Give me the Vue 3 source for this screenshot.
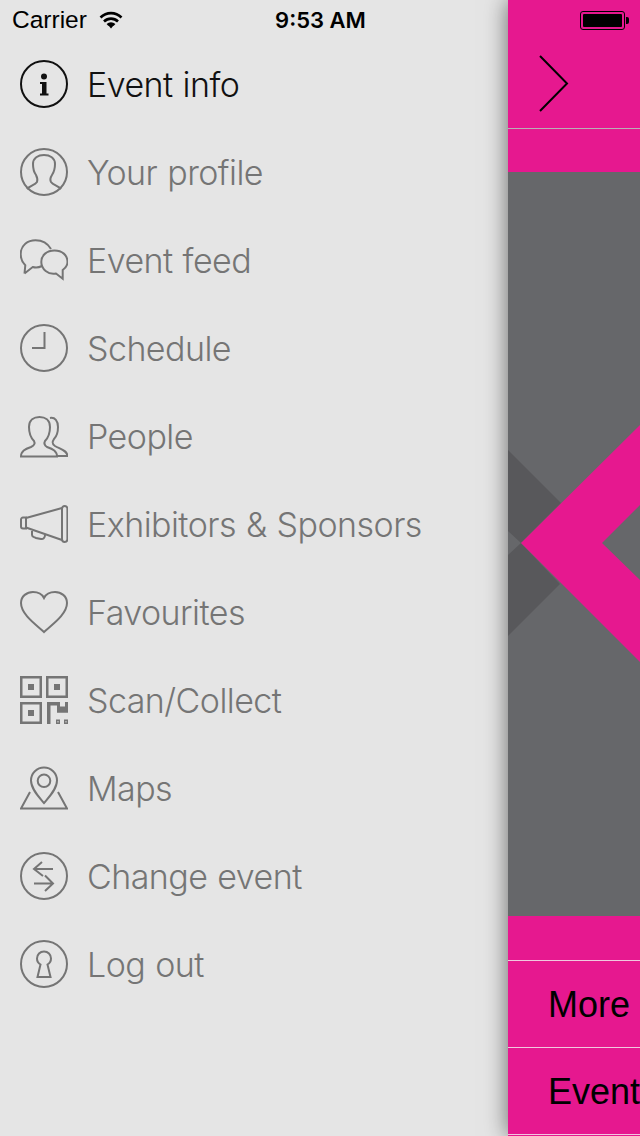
<script setup>
const ring = 'M24 1a23 23 0 1 0 0 46a23 23 0 1 0 0-46Z'

const items = [
  {
    label: 'Event info',
    active: true,
    lines: [ring],
    fills: ['M21 16.5a3 3 0 1 0 6 0a3 3 0 1 0-6 0Z M20 22H26.5V33.5H28.5V35.5H20V33.5H22V24H20Z'],
  },
  {
    label: 'Your profile',
    lines: [ring, 'M7 41C10 38 15 37 17 34C18 31 17 29 16 27C13 23 13 18 13 16C13 10 18 7 24 7C30 7 35 10 35 16C35 19 34 24 32 27C30 30 30 32 31 34C33 37 38 38 41 41'],
  },
  {
    label: 'Event feed',
    lines: [
      'M4.5 37.5L5.3 29.3C2 26 0.7 22 0.7 18C0.7 9 8 4.3 15.5 4.3C22.5 4.3 28 8 31 13M4.5 37.5L12.7 31C16 32 19 31.5 22 30',
      'M34.5 14.5C42 14.5 47.5 19 47.5 26C47.5 29 45.5 32 42.7 34L42.7 42.7L36 37.5C28 39 21.3 33 21.3 26C21.3 19 27 14.5 34.5 14.5Z',
    ],
  },
  {
    label: 'Schedule',
    lines: [ring, 'M24.5 8V24H12'],
  },
  {
    label: 'People',
    lines: [
      'M1 44.5C1 39 5 37 11 35C15 33 15 31 14 29C11 26 9 21 9 15C9 8 14 5 19.5 5C25 5 30 8 30 15C30 21 28 26 25 29C24 31 24 33 27 35C33 37 37 39 37 44.5Z',
      'M30 6C35 5 38 9 38 15C38 21 36 25 34 27C32 30 32 32 35 34C40 37 47 38 47.5 44H37',
    ],
  },
  {
    label: 'Exhibitors & Sponsors',
    lines: [
      'M44.7 6A2.7 2.7 0 0 1 47.4 8.7V39.3A2.7 2.7 0 0 1 42 39.3V8.7A2.7 2.7 0 0 1 44.7 6Z',
      'M3 17.5H6V28.5H3A2 2 0 0 1 1 26.5V19.5A2 2 0 0 1 3 17.5Z',
      'M6 18L42 8M6 27.5L42 40',
      'M12 31V35C12 37 14 37 16 38L21 39C23 39.5 25 38 25 35',
    ],
  },
  {
    label: 'Favourites',
    lines: ['M24 44C18 38 1 27 1 15C1 8 7 4 13 4C18 4 22 6 24 10C26 6 30 4 35 4C41 4 47 8 47 15C47 27 30 38 24 44Z'],
  },
  {
    label: 'Scan/Collect',
    fills: [
      'M0 0H22V22H0Z M2.5 2.5V19.5H19.5V2.5Z M8 8H14V14H8Z',
      'M26 0H48V22H26Z M28.5 2.5V19.5H45.5V2.5Z M34 8H40V14H34Z',
      'M0 26H22V48H0Z M2.5 28.5V45.5H19.5V28.5Z M8 34H14V40H8Z',
      'M27 26H40V30.5H45V26H48V36.7H37V29.5H30.5V48H27Z',
      'M36 43.5H40V48H36Z M37.5 45V46.5H38.5V45Z M44 43.5H48V48H44Z M45.5 45V46.5H46.5V45Z',
    ],
  },
  {
    label: 'Maps',
    lines: [
      'M10 28L1 44.5H47L38 28',
      'M24 39C19 33 11 25 11 16.5C11 9 17 3.5 24 3.5C31 3.5 37 9 37 16.5C37 25 29 33 24 39Z',
      'M24 10.5a6.3 6.3 0 1 0 0 12.6a6.3 6.3 0 1 0 0-12.6Z',
    ],
  },
  {
    label: 'Change event',
    lines: [ring, 'M33 17H14M22 10L14 17L23 24M14 31.5H33M25 23.5L33 31.5L25 39'],
  },
  {
    label: 'Log out',
    lines: [ring, 'M20.5 24.5C18 23 17 21 17 18.5C17 14.5 20 11.5 24 11.5C28 11.5 31 14.5 31 18.5C31 21 30 23 27.5 24.5L30.5 37H17.5Z'],
  },
]
</script>

<template>
  <div class="screen">
    <div class="status">
      <div class="status-left">
        <span>Carrier</span>
        <svg class="wifi" width="24" height="18" viewBox="0 0 24 18">
          <path d="M1.5 6.5C7.5 0.7 16.5 0.7 22.5 6.5" />
          <path d="M5 10.5C9 6.6 15 6.6 19 10.5" />
          <path d="M8.5 14C10.5 12 13.5 12 15.5 14" />
          <path class="wifi-dot" d="M9.5 14.5L12 12.5L14.5 14.5L12 17.5Z" />
        </svg>
      </div>
      <div class="status-time">9:53 AM</div>
      <div class="status-right">
        <div class="battery"><div class="battery-fill"></div></div>
        <div class="battery-nub"></div>
      </div>
    </div>

    <nav class="menu">
      <a v-for="item in items" :key="item.label" class="row" :class="{ active: item.active }">
        <svg class="icon" width="48" height="48" viewBox="0 0 48 48">
          <path v-for="d in item.lines" :key="d" class="line" :d="d" />
          <path v-for="d in item.fills" :key="d" class="solid" :d="d" />
        </svg>
        <span class="label">{{ item.label }}</span>
      </a>
    </nav>

    <main class="panel">
      <header class="panel-head">
        <svg width="30" height="58" viewBox="0 0 30 58">
          <path class="chevron" d="M1 1L28 28.5L1 56" />
        </svg>
      </header>
      <div class="panel-gap"></div>
      <div class="hero">
        <svg width="132" height="744" viewBox="508 172 132 744">
          <path fill="#58585b" d="M508 450L561 503L521 543L560 584L508 636V555L521 543L508 531Z" />
          <path fill="#e6188f" d="M521 543L640 425V505L602 543L640 580V662Z" />
        </svg>
      </div>
      <div class="panel-gap bottom"></div>
      <div class="panel-row">More</div>
      <div class="panel-row last">Event</div>
    </main>
  </div>
</template>

<style scoped>
.screen {
  position: relative;
  display: flex;
  width: 640px;
  height: 1136px;
  overflow: hidden;
  background: #e5e5e5;
}

.status {
  position: absolute;
  top: 0;
  left: 0;
  right: 0;
  height: 40px;
  z-index: 3;
  display: flex;
  align-items: center;
  justify-content: space-between;
  padding: 0 11px 0 12px;
  color: #000;
  font-family: "Liberation Sans", sans-serif;
  font-size: 24.5px;
}

.status-left {
  display: flex;
  align-items: center;
  gap: 12px;
  width: 200px;
}

.wifi {
  flex-shrink: 0;
}

.wifi path {
  fill: none;
  stroke: #000;
  stroke-width: 2.6;
}

.wifi .wifi-dot {
  fill: #000;
  stroke: none;
}

.status-time {
  font-family: Inter, sans-serif;
  font-size: 22px;
  font-weight: 600;
}

.status-right {
  display: flex;
  align-items: center;
  justify-content: flex-end;
  gap: 1px;
  width: 200px;
}

.battery {
  width: 45px;
  height: 19px;
  padding: 2px;
  box-sizing: border-box;
  border: 1px solid #000;
  border-radius: 3px;
}

.battery-fill {
  height: 100%;
  background: #000;
  border-radius: 1px;
}

.battery-nub {
  width: 3px;
  height: 7px;
  background: #000;
  border-radius: 0 2px 2px 0;
}

.menu {
  flex: 0 0 508px;
  padding-top: 40px;
  box-sizing: border-box;
}

.row {
  display: flex;
  align-items: center;
  gap: 19px;
  height: 88px;
  padding-left: 20px;
  color: #757575;
}

.row.active {
  color: #111;
}

.icon {
  flex-shrink: 0;
}

.line {
  fill: none;
  stroke: currentColor;
  stroke-width: 2;
}

.solid {
  fill: currentColor;
  fill-rule: evenodd;
}

.label {
  font-family: Inter, sans-serif;
  font-size: 34px;
  font-weight: 300;
  letter-spacing: -0.55px;
  word-spacing: 1px;
  white-space: nowrap;
}

.panel {
  flex: 0 0 132px;
  display: flex;
  flex-direction: column;
  background: #e6188f;
  box-shadow: 0 0 22px rgba(0, 0, 0, 0.55);
  z-index: 1;
}

.panel-head {
  flex: 0 0 129px;
  display: flex;
  align-items: center;
  box-sizing: border-box;
  padding: 40px 0 0 31px;
  border-bottom: 1px solid #b9b0b5;
}

.chevron {
  fill: none;
  stroke: #000;
  stroke-width: 2;
}

.panel-gap {
  flex: 0 0 43px;
}

.panel-gap.bottom {
  flex-basis: 44px;
}

.hero {
  flex: 0 0 744px;
  background: #66676a;
  line-height: 0;
}

.panel-row {
  flex: 0 0 87px;
  box-sizing: border-box;
  display: flex;
  align-items: center;
  padding: 2px 0 0 40px;
  border-top: 1px solid #f0c8de;
  color: #000;
  font-family: "Liberation Sans", sans-serif;
  font-size: 36px;
  white-space: nowrap;
  overflow: hidden;
}

.panel-row.last {
  flex-basis: 88px;
  border-bottom: 1px solid #f0c8de;
}
</style>
